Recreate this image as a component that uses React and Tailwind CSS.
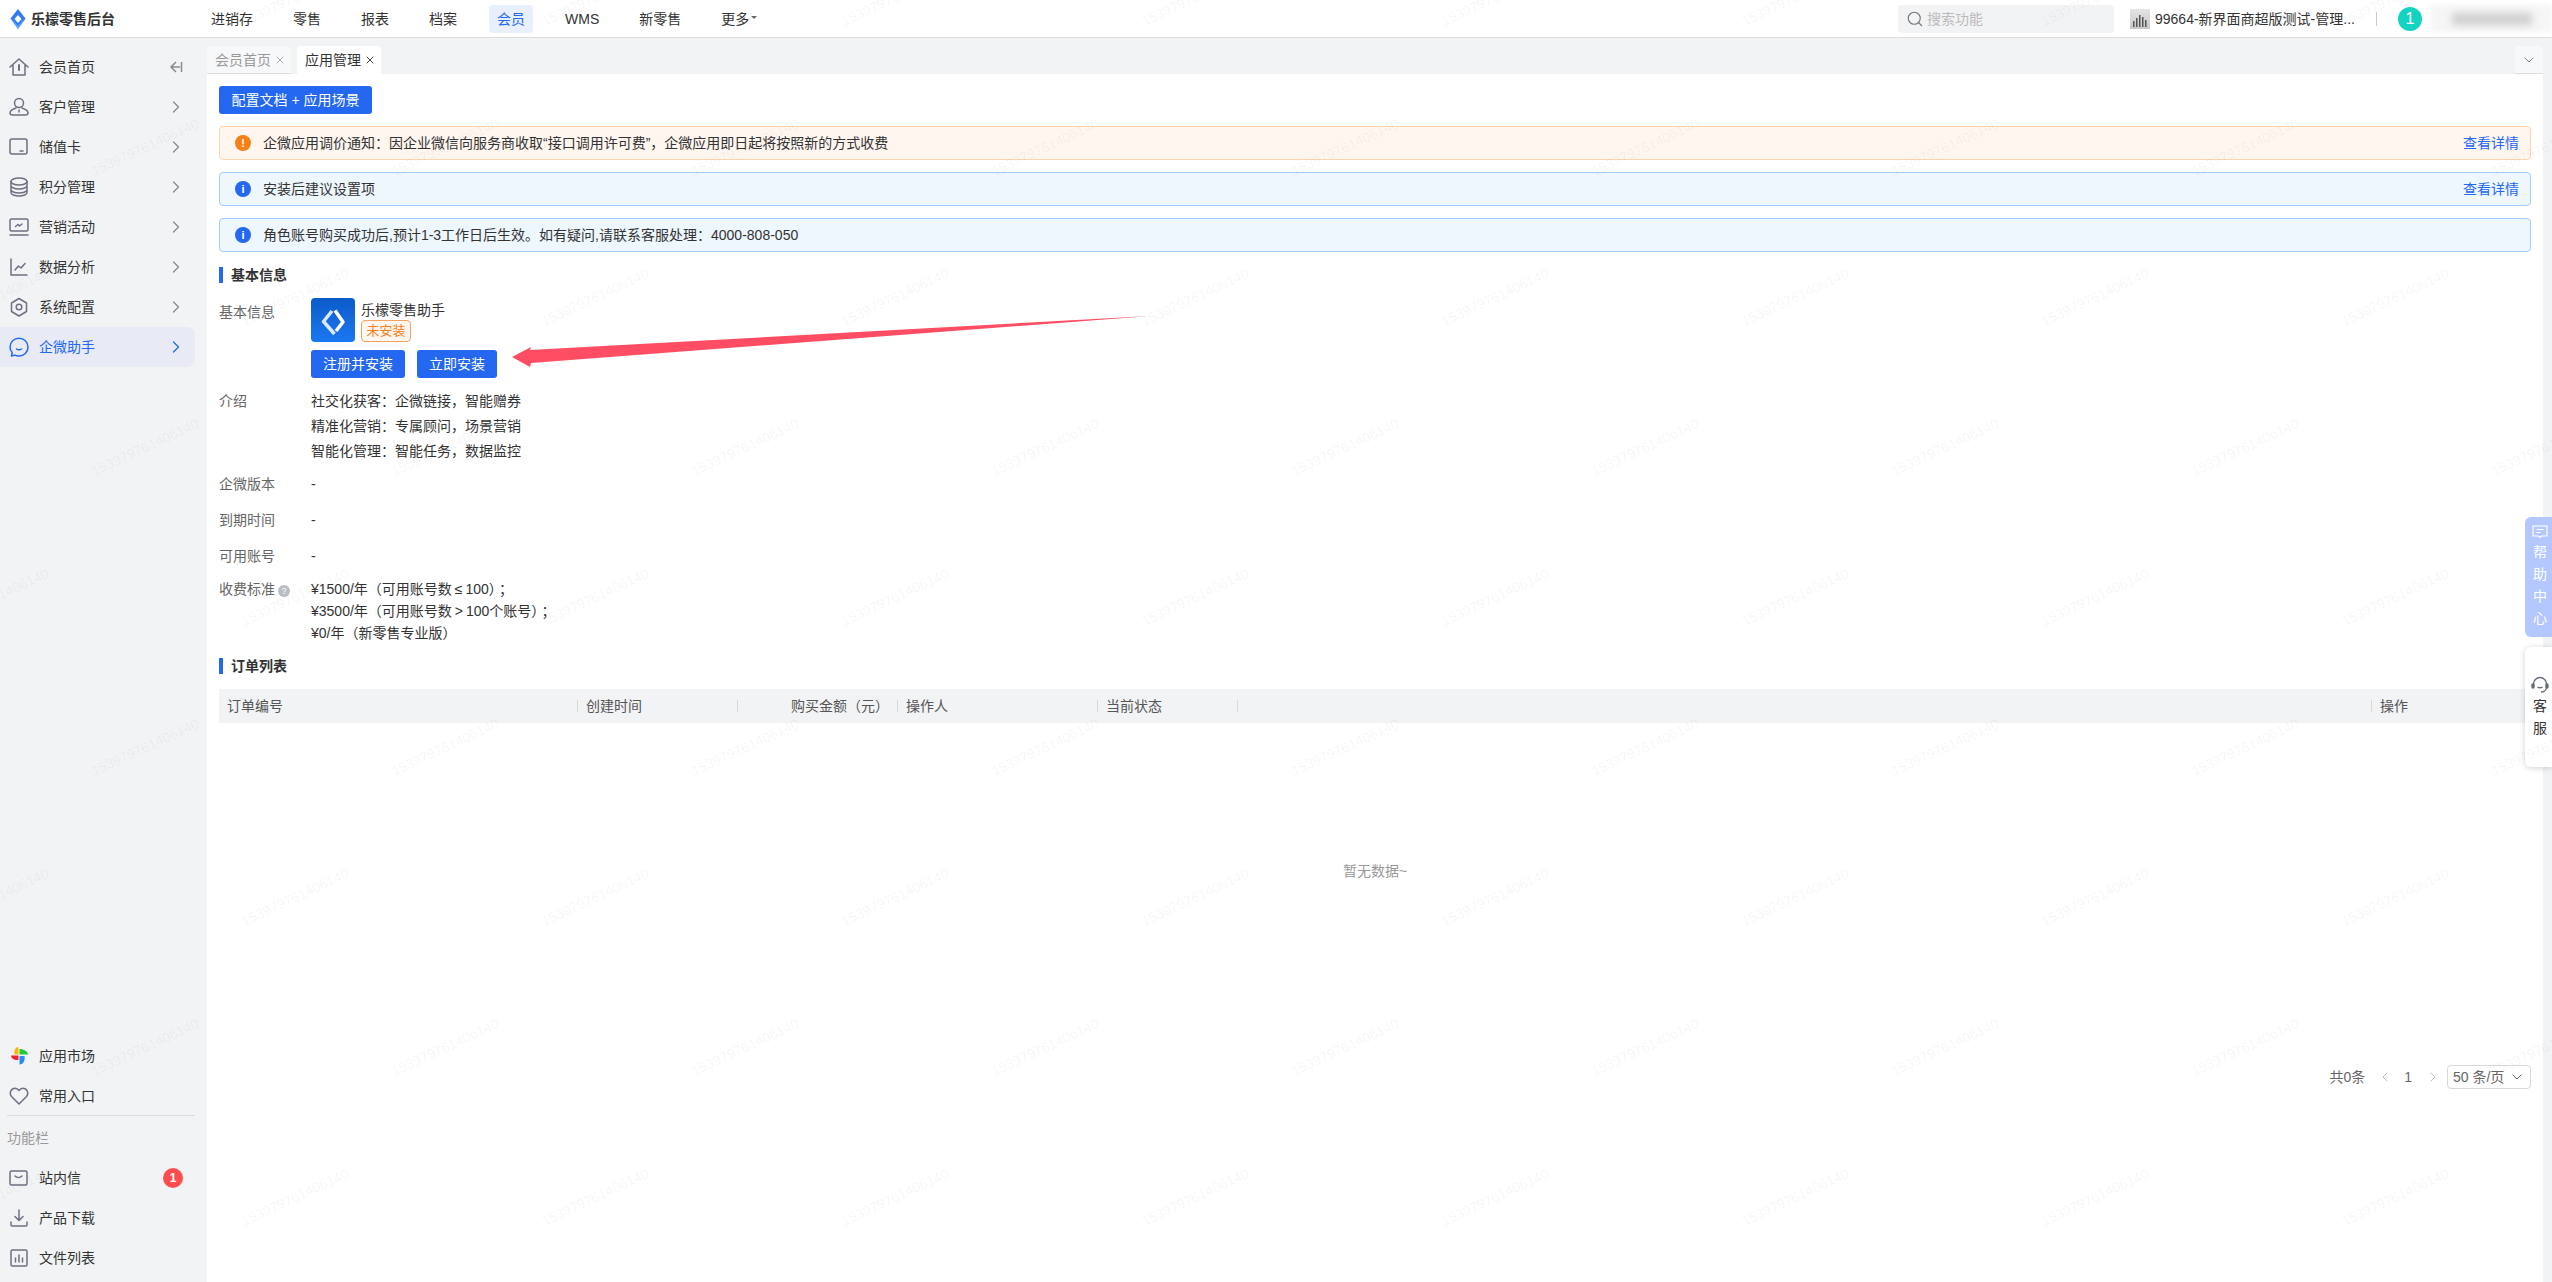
import { ChevronDown, ChevronLeft, ChevronRight, Search, X } from "lucide-react";

const FONT = "font-['Liberation_Sans','Noto_Sans_CJK_SC',sans-serif]";

// Sidebar icons, all on a 20 box
const stroke = {
  fill: "none",
  stroke: "currentColor",
  strokeWidth: 1.5,
  strokeLinecap: "round",
  strokeLinejoin: "round",
};

const Icon = ({ children, size = 20 }) => (
  <svg width={size} height={size} viewBox="0 0 20 20" {...stroke}>
    {children}
  </svg>
);

const HomeIcon = () => (
  <Icon>
    <path d="M1 10 10 2l9 8M4 8v10h12V8" />
    <path d="M10 8v5" strokeWidth="2" />
  </Icon>
);
const UserIcon = () => (
  <Icon>
    <circle cx="10" cy="6" r="4.5" />
    <path d="M7 11c-3 1-6 2.5-6 5 0 1.5 1 2 2.500 2h13c1.500 0 2.500-.5 2.500-2 0-2.500-3-4-6-5" />
    <path d="M10 13v2" />
  </Icon>
);
const CardIcon = () => (
  <Icon>
    <rect x="1" y="2" width="17" height="15" rx="2" />
    <path d="M11 14h3" />
  </Icon>
);
const DbIcon = () => (
  <Icon>
    <ellipse cx="10" cy="4.500" rx="8" ry="3.500" />
    <path d="M2 4.500v11c0 2 3.500 3.500 8 3.500s8-1.500 8-3.500v-11M2 8.500c0 2 3.500 3.500 8 3.500s8-1.500 8-3.500M2 12.500c0 2 3.500 3.500 8 3.500s8-1.500 8-3.500" />
  </Icon>
);
const ScreenIcon = () => (
  <Icon>
    <rect x="1" y="2" width="18" height="12" rx="1.500" />
    <path d="M1 18h18M6.500 9.500 9 7.500l1.500 1.500L13 7" />
  </Icon>
);
const ChartIcon = () => (
  <Icon>
    <path d="M2 2v16h16M6 13l3.500-4 2.500 2 4-4.500" />
  </Icon>
);
const GearIcon = () => (
  <Icon>
    <path d="M10 1.500 17.500 6v8.500L10 19l-7.500-4.500V6z" />
    <circle cx="10" cy="10" r="2.800" />
  </Icon>
);
const ChatIcon = () => (
  <Icon>
    <path d="M2.500 19 3.200 15.500C1.800 14 1 12.200 1 10.200 1 5.200 5 1.200 10 1.200s9 4 9 9-4 8.800-9 8.800c-1.500 0-3-.3-4.200-.9z" />
    <path d="M7.500 12c1.500 1 3.500 1 5 0" />
  </Icon>
);
const HeartIcon = () => (
  <Icon>
    <path d="M10 18 2.500 10.500C.5 8 1 4.500 3.500 3c2.500-1.500 5-.5 6.500 1.500C11.500 2.500 14 1.500 16.500 3c2.500 1.500 3 5 1 7.500z" />
  </Icon>
);
const MailIcon = () => (
  <Icon>
    <rect x="1" y="3" width="17" height="14" rx="1.500" />
    <path d="M6 8c2 2 5 2 7 0" />
  </Icon>
);
const DownloadIcon = () => (
  <Icon>
    <path d="M10 2v10M6 8.500l4 4 4-4M2 14v3c0 .5.500 1 1 1h14c.5 0 1-.5 1-1v-3" />
  </Icon>
);
const FileChartIcon = () => (
  <Icon>
    <rect x="2" y="2" width="16" height="16" rx="1.500" />
    <path d="M6.500 10v4M10 7v7M13.500 10v4" />
  </Icon>
);
const MarketIcon = () => (
  <svg width="20" height="20" viewBox="0 0 20 20">
    <path d="M9.500 1C6.500 1 4.800 4.500 5.500 8.500h4z" fill="#ffb400" />
    <path d="M10.500 3v5.500H19C19 5.500 15 3 10.500 3z" fill="#25c933" />
    <path d="M2 9.500c0 3 3.500 5 7.500 4.500V9.500z" fill="#f5222d" />
    <path d="M10.500 10v8.500c3 0 6-3.500 5-8.500z" fill="#2b8cf7" />
  </svg>
);

const mainMenu = [
  ["会员首页", HomeIcon],
  ["客户管理", UserIcon],
  ["储值卡", CardIcon],
  ["积分管理", DbIcon],
  ["营销活动", ScreenIcon],
  ["数据分析", ChartIcon],
  ["系统配置", GearIcon],
  ["企微助手", ChatIcon],
];

const SideRow = ({ label, icon: RowIcon, active, right }) => (
  <div
    className={`flex h-10 w-[195px] items-center rounded-r-lg pl-[9px] pr-[9px] ${
      active ? "bg-[#e8ebf5] text-[#2468f2]" : "text-[#333]"
    }`}
  >
    <span className={active ? "text-[#2468f2]" : "text-[#6c7080]"}>
      <RowIcon />
    </span>
    <span className="ml-2.5 flex-1 text-sm leading-5">{label}</span>
    {right}
  </div>
);

const Sidebar = () => (
  <aside className="flex w-[207px] shrink-0 flex-col justify-between bg-[#f2f3f5] pt-[9px]">
    <div>
      {mainMenu.map(([label, icon], i) => (
        <SideRow
          key={label}
          label={label}
          icon={icon}
          active={label === "企微助手"}
          right={
            i === 0 ? (
              <span className="flex w-5 justify-center">
                <svg width="14" height="14" viewBox="0 0 14 14" fill="none" stroke="#8a8a8a" strokeWidth="1.500">
                  <path d="M7 2 2 7l5 5M2 7h9M12.500 2v10" />
                </svg>
              </span>
            ) : (
              <ChevronRight className={`h-5 w-5 ${label === "企微助手" ? "text-[#2468f2]" : "text-[#8a8a8a]"}`} strokeWidth={1.5} />
            )
          }
        />
      ))}
    </div>
    <div className="pb-[4px]">
      <SideRow label="应用市场" icon={MarketIcon} />
      <SideRow label="常用入口" icon={HeartIcon} />
      <div className="mx-[7px] mt-[-1px] h-px w-[188px] bg-[#d9dbe0]" />
      <div className="ml-[7px] mt-3 text-sm leading-5 text-[#999]">功能栏</div>
      <div className="mt-[10px]">
        <SideRow
          label="站内信"
          icon={MailIcon}
          right={
            <span className="mr-[3px] flex h-5 w-5 items-center justify-center rounded-full bg-[#ff4d4f] text-xs font-bold text-white">
              1
            </span>
          }
        />
        <SideRow label="产品下载" icon={DownloadIcon} />
        <SideRow label="文件列表" icon={FileChartIcon} />
      </div>
    </div>
  </aside>
);

const navItems = ["进销存", "零售", "报表", "档案", "会员", "WMS", "新零售"];

const TopBar = () => (
  <header className="flex h-[38px] shrink-0 items-center border-b border-[#dcdcdc] bg-white">
    <div className="flex w-[203px] shrink-0 items-center pl-[10px]">
      <svg width="16" height="20" viewBox="0 0 16 20">
        <path d="M8 0 15.500 9.500 8 20 .5 9.500z" fill="#2f7bf5" />
        <path d="M.5 9.500 8 20l7.500-10.500-3.500 3L8 17l-4-4.500z" fill="#62a8ff" />
        <path d="M8 6 11.500 10 8 14 4.500 10z" fill="#fff" />
      </svg>
      <span className="ml-[5px] text-sm font-bold leading-5 text-[#333]">乐檬零售后台</span>
    </div>
    <nav className="flex items-center gap-6">
      {navItems.map((item) => (
        <span
          key={item}
          className={`flex h-7 items-center rounded px-2 text-sm ${
            item === "会员" ? "bg-[#e8effd] text-[#2468f2]" : "text-[#333]"
          }`}
        >
          {item}
        </span>
      ))}
      <span className="flex h-7 items-center px-2 text-sm text-[#333]">
        更多
        <span className="ml-[2px] mt-[-2px] h-0 w-0 border-x-[3px] border-t-[3px] border-x-transparent border-t-[#666]" />
      </span>
    </nav>
    <div className="ml-auto flex items-center">
      <div className="flex h-7 w-[216px] items-center rounded bg-[#f2f3f5] pl-2">
        <Search className="h-[18px] w-[18px] text-[#777]" strokeWidth={1.5} />
        <span className="ml-[3px] text-sm text-[#bbb]">搜索功能</span>
      </div>
      <div className="ml-4 h-5 w-5 overflow-hidden bg-gradient-to-b from-[#e4e4e4] to-[#c8c8c8]">
        <svg width="20" height="20" viewBox="0 0 20 20" className="blur-[0.4px]">
          <path d="M3 18v-6h1.500v6zM6 18V9h1.500v9zM9 18V6h1.500v12zM12 18V8h1.500v10zM15 18v-7h1.500v7z" fill="#555" />
        </svg>
      </div>
      <span className="ml-[5px] w-[200px] text-sm text-[#333]">99664-新界面商超版测试-管理...</span>
      <div className="ml-[21px] h-[14px] w-px bg-[#ccc]" />
      <span className="ml-[21px] flex h-6 w-6 items-center justify-center rounded-full bg-[#14d3c0] text-base text-white">
        1
      </span>
      <div className="ml-[9px] flex h-[27px] w-[121px] items-center justify-center bg-[#f6f6f6] blur-[2px]">
        <div className="h-3 w-20 bg-[#cfcfcf] blur-[3px]" />
      </div>
    </div>
  </header>
);

const Tab = ({ label, active }) => (
  <div
    className={`flex h-7 w-[84px] items-center whitespace-nowrap rounded-t px-2 text-sm ${
      active ? "bg-white text-[#333]" : "border-b border-[#ddd] bg-[#f7f8fa] text-[#999]"
    }`}
  >
    {label}
    <X className={`ml-[3px] h-3 w-3 shrink-0 ${active ? "text-[#444]" : "text-[#aaa]"}`} strokeWidth={2} />
  </div>
);

const Alert = ({ tone, text, link }) => {
  const orange = tone === "orange";
  return (
    <div
      className={`flex h-[34px] items-center rounded border pl-[15px] pr-[11px] text-sm text-[#333] ${
        orange ? "border-[#ffd5ae] bg-[#fff6f0]" : "border-[#a5cdfb] bg-[#eef6fe]"
      }`}
    >
      <span
        className={`flex h-4 w-4 items-center justify-center rounded-full text-[11px] font-bold leading-none text-white ${
          orange ? "bg-[#f77f17]" : "bg-[#2468f2]"
        }`}
      >
        {orange ? "!" : "i"}
      </span>
      <span className="ml-3 flex-1">{text}</span>
      {link && <span className="text-[#2468f2]">查看详情</span>}
    </div>
  );
};

const SectionTitle = ({ children }) => (
  <div className="flex h-4 items-center border-l-4 border-[#2468f2] pl-2 text-sm font-bold text-[#333]">
    {children}
  </div>
);

const Field = ({ label, children, className = "" }) => (
  <div className={`flex text-sm ${className}`}>
    <div className="w-[92px] shrink-0 text-[#666]">{label}</div>
    <div className="text-[#333]">{children}</div>
  </div>
);

const BlueButton = ({ children, className = "" }) => (
  <button className={`flex h-7 items-center justify-center rounded-[3px] bg-[#2468f2] text-sm text-white ${className}`}>
    {children}
  </button>
);

const columns = [
  ["订单编号", ""],
  ["创建时间", ""],
  ["购买金额（元）", "justify-end pr-2"],
  ["操作人", ""],
  ["当前状态", ""],
  ["", ""],
  ["操作", ""],
];

const OrderTable = () => (
  <div className="mt-[15px]">
    <div className="grid h-[34px] grid-cols-[359px_160px_160px_200px_140px_1fr_159px] items-center bg-[#f2f3f5] text-sm text-[#555]">
      {columns.map(([label, align], i) => (
        <div key={i} className="flex items-center">
          <div className={`flex flex-1 pl-2 ${align}`}>{label}</div>
          {i < 6 && <div className="h-3 w-px bg-[#d9d9d9]" />}
        </div>
      ))}
    </div>
    <div className="flex h-[342px] items-center justify-center pb-[46px] text-sm text-[#999]">暂无数据~</div>
    <div className="flex h-6 items-center justify-end text-sm text-[#666]">
      共0条
      <ChevronLeft className="ml-3 h-4 w-4 text-[#bbb]" strokeWidth={1.5} />
      <span className="ml-[11px] mr-[13px] text-[#666]">1</span>
      <ChevronRight className="h-4 w-4 text-[#bbb]" strokeWidth={1.5} />
      <div className="ml-[6px] flex h-6 w-[84px] items-center rounded border border-[#d9d9d9] pl-[5px]">
        50 条/页
        <ChevronDown className="ml-[5px] h-4 w-4 text-[#666]" strokeWidth={1.5} />
      </div>
    </div>
  </div>
);

const Content = () => (
  <main className="flex min-w-0 flex-1 flex-col">
    <div className="flex h-9 shrink-0 items-end bg-[#f2f3f5]">
      <div className="flex flex-1 gap-[6px]">
        <Tab label="会员首页" />
        <Tab label="应用管理" active />
      </div>
      <div className="flex h-7 w-7 items-center justify-center rounded-t border-b border-[#ddd] bg-[#f7f8fa]">
        <ChevronDown className="h-4 w-4 text-[#888]" strokeWidth={1.5} />
      </div>
    </div>
    <div className="flex-1 bg-white px-3 pt-3">
      <BlueButton className="w-[153px]">配置文档 + 应用场景</BlueButton>
      <div className="mt-3 flex flex-col gap-3">
        <Alert
          tone="orange"
          text="企微应用调价通知：因企业微信向服务商收取“接口调用许可费”，企微应用即日起将按照新的方式收费"
          link
        />
        <Alert tone="blue" text="安装后建议设置项" link />
        <Alert tone="blue" text="角色账号购买成功后,预计1-3工作日后生效。如有疑问,请联系客服处理：4000-808-050" />
      </div>
      <div className="mt-[15px]">
        <SectionTitle>基本信息</SectionTitle>
      </div>
      <Field label={<div className="mt-[3px] leading-[22px]">基本信息</div>} className="mt-[15px]">
        <div className="flex gap-[6px]">
          <div className="h-11 w-11 rounded bg-gradient-to-b from-[#0c5bc9] to-[#1a78f2]">
            <svg width="44" height="44" viewBox="0 0 44 44" fill="none" strokeWidth="3.500" strokeLinejoin="round">
              <path d="M21 13 12.500 23.500 23.500 36" stroke="#dbe7ff" />
              <path d="M24 12.500 32 24 25 33" stroke="#fff" />
            </svg>
          </div>
          <div>
            <div className="h-[22px] pt-px leading-[22px]">乐檬零售助手</div>
            <div className="flex h-[22px] w-[50px] items-center justify-center rounded-[4px] border border-[#f3a25f] bg-[#fff6f0] text-[13px] text-[#f77f17]">
              未安装
            </div>
          </div>
        </div>
        <div className="mt-2 flex gap-3">
          <BlueButton className="w-[94px]">注册并安装</BlueButton>
          <BlueButton className="w-20">立即安装</BlueButton>
        </div>
      </Field>
      <Field label="介绍" className="mt-[11px] leading-[25px]">
        <div>社交化获客：企微链接，智能赠券</div>
        <div>精准化营销：专属顾问，场景营销</div>
        <div>智能化管理：智能任务，数据监控</div>
      </Field>
      <div className="mt-[2px]">
        <Field label="企微版本" className="h-9 items-center">-</Field>
        <Field label="到期时间" className="h-9 items-center">-</Field>
        <Field label="可用账号" className="h-9 items-center">-</Field>
      </div>
      <Field
        label={
          <span className="flex items-center leading-[22px]">
            收费标准
            <span className="ml-[3px] mt-[3px] flex h-3 w-3 items-center justify-center rounded-full bg-[#b8bcc4] text-[9px] text-white">?</span>
          </span>
        }
        className="mt-1 leading-[22px]"
      >
        <div>
          ¥1500/年（可用账号数<span className="mx-[3px]">≤</span>100）<span className="ml-[3px]">；</span>
        </div>
        <div>
          ¥3500/年（可用账号数<span className="mx-[3px]">&gt;</span>100个账号）<span className="ml-[3px]">；</span>
        </div>
        <div>¥0/年（新零售专业版）</div>
      </Field>
      <div className="mt-[14px]">
        <SectionTitle>订单列表</SectionTitle>
      </div>
      <OrderTable />
    </div>
  </main>
);

// Floating tabs on the right edge
const HelpTabs = () => (
  <div className={`absolute right-0 top-[517px] flex w-[27px] flex-col gap-[10px] text-sm ${FONT}`}>
    <div className="flex h-[120px] flex-col items-center rounded-l-md bg-[#b4c7ff] pl-[3px] pt-[7px] text-white">
      <svg width="16" height="16" viewBox="0 0 16 16" fill="none" stroke="#fff" strokeWidth="1.200">
        <path d="M1 2h14v10H9.500L8 13.500 6.500 12H1zM4.500 5.500h7M4.500 8.500h4" />
      </svg>
      {["帮", "助", "中", "心"].map((c) => (
        <span key={c} className="mt-[2px] h-5 leading-5 first:mt-[5px]">{c}</span>
      ))}
    </div>
    <div className="flex h-[120px] flex-col items-center rounded-l-md bg-white pl-[3px] pt-[29px] text-[#333] shadow-[0_1px_6px_rgba(0,0,0,0.18)]">
      <svg width="18" height="18" viewBox="0 0 18 18" fill="none" stroke="#666c7a" strokeWidth="1.400">
        <path d="M2.500 10V8a6.500 6.500 0 0 1 13 0v3c0 3-2.500 5-5.500 5" />
        <rect x="1" y="8" width="2" height="4" rx="1" fill="#666c7a" />
        <rect x="15" y="8" width="2" height="4" rx="1" fill="#666c7a" />
        <path d="M6.500 11c1.500 1 3.500 1 5 0" />
      </svg>
      {["客", "服"].map((c) => (
        <span key={c} className="mt-[2px] h-5 leading-5 first:mt-[3px]">{c}</span>
      ))}
    </div>
  </div>
);

// Red annotation arrow drawn on the screenshot
const Arrow = () => (
  <svg className="pointer-events-none absolute left-0 top-0" width="2552" height="1282">
    <path d="M512 357 531 347 530 350 1150 316 531 363 530 367z" fill="#ff4d63" />
  </svg>
);

const marks = [];
for (let row = 0; row < 10; row++) {
  for (let col = -1; col < 10; col++) {
    marks.push({
      x: (row % 2 === 0 ? 295 : 445) + col * 300,
      y: -3 + row * 150,
    });
  }
}

const Watermark = () => (
  <div className={`pointer-events-none absolute inset-0 overflow-hidden ${FONT}`}>
    {marks.map((m) => (
      <span
        key={`${m.x}-${m.y}`}
        className="absolute w-[120px] -translate-x-1/2 -translate-y-1/2 -rotate-[25deg] whitespace-nowrap text-center text-sm leading-4 text-black/5"
        style={{ left: m.x, top: m.y }}
      >
        153979761406140
      </span>
    ))}
  </div>
);

export default function App() {
  return (
    <div className={`relative flex h-screen w-screen flex-col overflow-hidden bg-[#f2f3f5] ${FONT}`}>
      <TopBar />
      <div className="flex min-h-0 flex-1 pr-[9px]">
        <Sidebar />
        <Content />
      </div>
      <Arrow />
      <HelpTabs />
      <Watermark />
    </div>
  );
}
